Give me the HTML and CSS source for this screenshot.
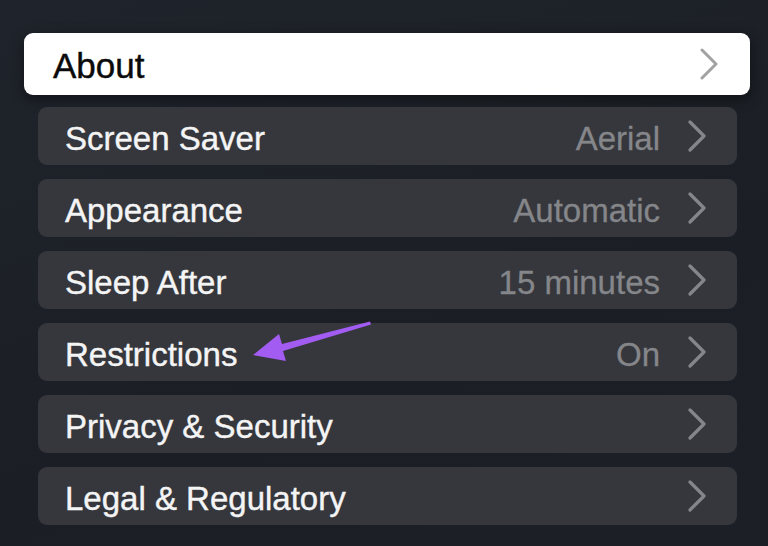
FILE: index.html
```html
<!DOCTYPE html>
<html lang="en">
<head>
    <meta charset="UTF-8">
    <meta name="viewport" content="width=device-width, initial-scale=1.0">
    <title>Settings - General</title>
    <link rel="stylesheet" href="styles.css">
</head>
<body>
    <div class="settings">
        <div class="row focused">
            <span class="label">About</span>
            <svg class="chevron" width="20" height="32" viewBox="0 0 20 32"><path d="M3 2 L17 16 L3 30" /></svg>
        </div>
        <div class="row">
            <span class="label">Screen Saver</span>
            <span class="value">Aerial</span>
            <svg class="chevron" width="20" height="32" viewBox="0 0 20 32"><path d="M3 2 L17 16 L3 30" /></svg>
        </div>
        <div class="row">
            <span class="label">Appearance</span>
            <span class="value">Automatic</span>
            <svg class="chevron" width="20" height="32" viewBox="0 0 20 32"><path d="M3 2 L17 16 L3 30" /></svg>
        </div>
        <div class="row">
            <span class="label">Sleep After</span>
            <span class="value">15 minutes</span>
            <svg class="chevron" width="20" height="32" viewBox="0 0 20 32"><path d="M3 2 L17 16 L3 30" /></svg>
        </div>
        <div class="row">
            <span class="label">Restrictions</span>
            <span class="value">On</span>
            <svg class="chevron" width="20" height="32" viewBox="0 0 20 32"><path d="M3 2 L17 16 L3 30" /></svg>
        </div>
        <div class="row">
            <span class="label">Privacy &amp; Security</span>
            <svg class="chevron" width="20" height="32" viewBox="0 0 20 32"><path d="M3 2 L17 16 L3 30" /></svg>
        </div>
        <div class="row">
            <span class="label">Legal &amp; Regulatory</span>
            <svg class="chevron" width="20" height="32" viewBox="0 0 20 32"><path d="M3 2 L17 16 L3 30" /></svg>
        </div>
    </div>

    <!-- annotation arrow pointing at Restrictions -->
    <svg class="pointer" width="768" height="546" viewBox="0 0 768 546">
        <path d="M370 321.5 L282 344 L279 334 L253 355 L286 361 L283 351 L371 324.5 Z" />
    </svg>
</body>
</html>
```

FILE: styles.css
```css
body {
    font-family: 'Liberation Sans', Arial, sans-serif;
    background: linear-gradient(160deg, #1f242c, #1b1e24 60%, #1c1f25);
    color: #f4f4f5;
    margin: 0;
    padding: 0;
    width: 768px;
    height: 546px;
    overflow: hidden;
}

.settings {
    display: flex;
    flex-direction: column;
    gap: 14px;
    padding: 33px 31px 0 38px;
}

.row {
    display: flex;
    align-items: center;
    height: 58px;
    padding: 0 30px 0 27px;
    background: #35373c;
    border-radius: 9px;
    font-size: 33px;
}

.row .label {
    flex: 1;
    padding-top: 5px;
    -webkit-text-stroke: 0.4px #f4f4f5;
}

.row .value {
    color: #85868a;
    padding-top: 5px;
    margin-right: 27px;
    -webkit-text-stroke: 0.3px #85868a;
}

.chevron {
    flex-shrink: 0;
}

.chevron path {
    fill: none;
    stroke: #85868a;
    stroke-width: 3.2;
    stroke-linecap: round;
    stroke-linejoin: round;
}

.row.focused {
    height: 62px;
    margin: 0 -13px -2px -14px;
    padding: 0 31px 0 29px;
    background: #ffffff;
    color: #0b0b0c;
    font-size: 35px;
    border-radius: 9px;
    box-shadow: 0 4px 14px rgba(0, 0, 0, 0.45);
}

.row.focused .label {
    padding-top: 3px;
    -webkit-text-stroke: 0.4px #0b0b0c;
}

.row.focused .chevron path {
    stroke: #a2a2a4;
    stroke-width: 3;
}

.pointer {
    position: absolute;
    left: 0;
    top: 0;
}

.pointer path {
    fill: #a35cf2;
}
```
